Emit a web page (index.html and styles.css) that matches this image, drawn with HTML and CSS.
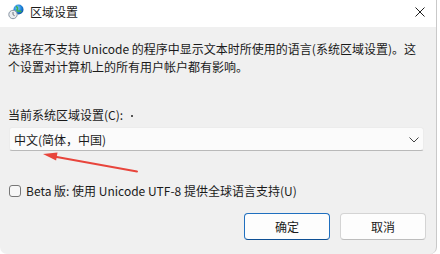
FILE: index.html
```html
<!DOCTYPE html>
<html lang="zh-CN">
<head>
<meta charset="utf-8">
<title>区域设置</title>
<link rel="stylesheet" href="styles.css">
</head>
<body>
<div class="window">
  <div class="titlebar">
    <svg class="app-icon" width="16" height="16" viewBox="0 0 16 16">
      <defs>
        <radialGradient id="g" cx="0.4" cy="0.35" r="0.7">
          <stop offset="0" stop-color="#7fd0ff"/>
          <stop offset="0.6" stop-color="#1a7fd8"/>
          <stop offset="1" stop-color="#0b4f9a"/>
        </radialGradient>
      </defs>
      <circle cx="10.5" cy="5.5" r="5" fill="url(#g)"/>
      <path d="M8 2.5c1.5 0.5 2 1.8 1.2 3 -0.6 0.9 0.4 2 1.5 1.6 1-0.4 1.8 0.3 2.6 0.8" fill="none" stroke="#3fb24a" stroke-width="1.6"/>
      <circle cx="5" cy="10.5" r="4.2" fill="#e9ecef" stroke="#8a96a3" stroke-width="1"/>
      <path d="M5 8v2.7l1.6 1" fill="none" stroke="#5c6670" stroke-width="0.9"/>
    </svg>
    <span class="title">区域设置</span>
    <svg class="close" width="10" height="10" viewBox="0 0 10 10">
      <path d="M0.5 0.5L9.5 9.5M9.5 0.5L0.5 9.5" stroke="#1f1f1f" stroke-width="1"/>
    </svg>
  </div>
  <div class="content">
    <p class="desc">选择在不支持 Unicode 的程序中显示文本时所使用的语言(系统区域设置)。这个设置对计算机上的所有用户帐户都有影响。</p>
    <div class="label">当前系统区域设置(C):<span class="dot"></span></div>
    <div class="select">
      <span>中文(简体，中国)</span>
      <svg class="chev" width="10" height="6" viewBox="0 0 10 6">
        <path d="M0.5 0.5L5 5L9.5 0.5" fill="none" stroke="#444" stroke-width="1"/>
      </svg>
    </div>
    <label class="check">
      <span class="box"></span>
      <span>Beta 版: 使用 Unicode UTF-8 提供全球语言支持(U)</span>
    </label>
    <div class="buttons">
      <button class="btn primary">确定</button>
      <button class="btn">取消</button>
    </div>
  </div>
  <svg class="arrow" width="110" height="30" viewBox="0 0 110 30">
    <path d="M96 19.5L13 4.5" stroke="#e8453c" stroke-width="2" stroke-linecap="round"/>
    <path d="M2 2L16.5 0.4L15.1 8.6Z" fill="#e8453c"/>
  </svg>
</div>
</body>
</html>
```
FILE: styles.css
```css
html, body {
  margin: 0;
  padding: 0;
  background: #ffffff;
}
body {
  font-family: "Noto Sans CJK SC", "Noto Sans", sans-serif;
  font-size: 12px;
  color: #1a1a1a;
}
.window {
  position: relative;
  width: 437px;
  height: 254px;
  background: #f0f0f0;
  border-right: 1px solid #c9c9c9;
  border-bottom-right-radius: 7px;
  border-bottom-left-radius: 7px;
  box-sizing: border-box;
  overflow: hidden;
}
.titlebar {
  height: 27px;
  background: #ffffff;
  display: flex;
  align-items: center;
  padding: 0 10px 3px 8px;
  box-sizing: border-box;
}
.app-icon {
  margin-right: 6px;
}
.title {
  font-size: 12px;
  line-height: 16px;
  flex: 1;
}
.close {
  margin-right: 1px;
}
.content {
  padding: 13px 10px 0 8px;
}
.desc {
  margin: 0;
  line-height: 18px;
}
.label {
  margin-top: 30px;
  line-height: 18px;
  display: flex;
  align-items: center;
}
.dot {
  width: 2px;
  height: 2px;
  background: #222;
  border-radius: 50%;
  margin-left: 8px;
  margin-top: 2px;
}
.select {
  margin: 3px 2px 0 1px;
  height: 24px;
  background: #fbfbfb;
  border: 1px solid #ececec;
  border-bottom-color: #b9b9b9;
  border-radius: 3px;
  box-sizing: border-box;
  display: flex;
  align-items: center;
  justify-content: space-between;
  padding: 0 4px 0 4px;
}
.chev {
  margin-top: 2px;
}
.check {
  margin-top: 31px;
  display: flex;
  align-items: center;
  gap: 5px;
  line-height: 18px;
}
.box {
  width: 12px;
  height: 12px;
  border: 1px solid #777;
  border-radius: 3px;
  background: #f7f7f7;
  box-sizing: border-box;
  margin-left: 1px;
}
.buttons {
  margin-top: 13px;
  display: flex;
  justify-content: flex-end;
  gap: 10px;
}
.btn {
  width: 86px;
  height: 27px;
  font-family: inherit;
  font-size: 12px;
  color: #1a1a1a;
  background: #fdfdfd;
  border: 1px solid #d4d4d4;
  border-bottom-color: #bdbdbd;
  border-radius: 4px;
  padding: 0;
}
.primary {
  border: 1px solid #1f6fbf;
  border-bottom-color: #0e4f94;
}
.arrow {
  position: absolute;
  left: 41px;
  top: 152px;
}
```
